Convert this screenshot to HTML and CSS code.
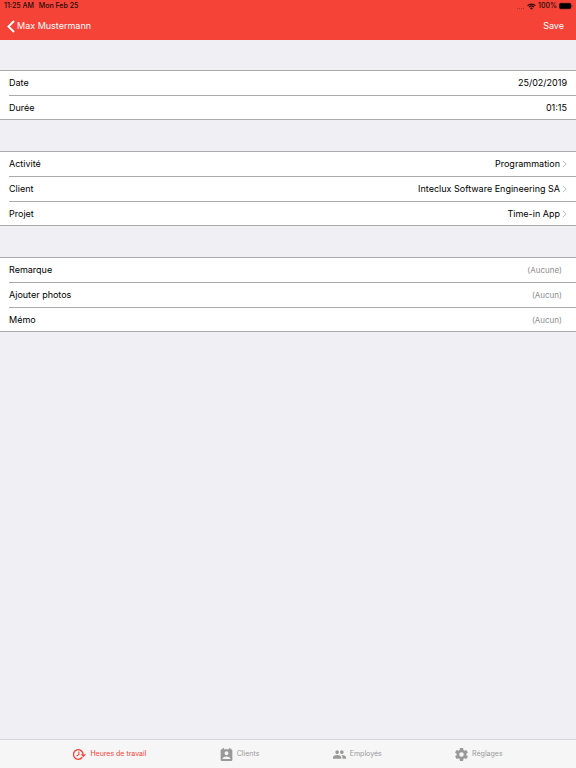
FILE: index.html
```html
<!DOCTYPE html>
<html lang="fr">
<head>
<meta charset="utf-8">
<meta name="viewport" content="width=device-width, initial-scale=1">
<title>Heures de travail</title>
<link rel="stylesheet" href="styles.css">
</head>
<body>
<header class="header">
  <div class="status">
    <div class="status-side"><span>11:25 AM</span><span>Mon Feb 25</span></div>
    <div class="status-side status-right">
      <svg class="signal" viewBox="0 0 10 8" aria-hidden="true"><path d="M1 6.5h1M3.3 6.5h1M5.6 6.5h1M7.9 6.5h1" stroke="currentColor"/></svg>
      <svg class="wifi" viewBox="0 0 16 12" aria-hidden="true"><path d="M1 4.5a10 10 0 0 1 14 0M3.5 7.2a6.4 6.4 0 0 1 9 0" fill="none" stroke="currentColor" stroke-width="2.2"/><path d="M5.4 9a3.7 3.7 0 0 1 5.2 0L8 11.8z" fill="currentColor"/></svg>
      <span>100%</span>
      <svg class="battery" viewBox="0 0 14 8" aria-hidden="true"><rect x=".4" y="1.2" width="11.6" height="5.6" rx="1.4" fill="currentColor" stroke="currentColor" stroke-opacity=".4" stroke-width=".8"/><path d="M12.8 3v2q.9-.3.9-1t-.9-1z" fill="currentColor" opacity=".6"/></svg>
    </div>
  </div>
  <nav class="navbar">
    <a class="back" href="#"><svg viewBox="0 0 8 13" aria-hidden="true"><path d="M7 1 1.500 6.500 7 12" fill="none" stroke="currentColor" stroke-width="1.900"/></svg>Max Mustermann</a>
    <button class="save" type="button">Save</button>
  </nav>
</header>
<main class="content">
  <section class="group">
    <div class="row"><div class="cell"><label for="date">Date</label><input id="date" type="text" value="25/02/2019"></div></div>
    <div class="row"><div class="cell"><label for="duration">Durée</label><input id="duration" type="text" value="01:15"></div></div>
  </section>
  <section class="group">
    <div class="row"><button class="cell" type="button"><span>Activité</span><span class="value">Programmation<svg class="chevron" viewBox="0 0 5 8" aria-hidden="true"><path d="m.8.8 3.400 3.200L.8 7.200"/></svg></span></button></div>
    <div class="row"><button class="cell" type="button"><span>Client</span><span class="value">Inteclux Software Engineering SA<svg class="chevron" viewBox="0 0 5 8" aria-hidden="true"><path d="m.8.8 3.400 3.200L.8 7.200"/></svg></span></button></div>
    <div class="row"><button class="cell" type="button"><span>Projet</span><span class="value">Time-in App<svg class="chevron" viewBox="0 0 5 8" aria-hidden="true"><path d="m.8.8 3.400 3.200L.8 7.200"/></svg></span></button></div>
  </section>
  <section class="group">
    <div class="row"><button class="cell" type="button"><span>Remarque</span><span class="empty">(Aucune)</span></button></div>
    <div class="row"><button class="cell" type="button"><span>Ajouter photos</span><span class="empty">(Aucun)</span></button></div>
    <div class="row"><button class="cell" type="button"><span>Mémo</span><span class="empty">(Aucun)</span></button></div>
  </section>
</main>
<nav class="tabs">
  <a class="tab active" href="#"><svg viewBox="1 1 27 23" aria-hidden="true"><path d="M20.200 18.200A10 10 0 1 1 22 12.500" fill="none" stroke="currentColor" stroke-width="2.800"/><path d="M17 12H28l-5.500 6z" fill="currentColor"/><path d="M13.200 6.500v6l-4.400 3" fill="none" stroke="currentColor" stroke-width="2.200"/></svg>Heures de travail</a>
  <a class="tab" href="#"><svg class="narrow" viewBox="3 1 18 20" aria-hidden="true"><path fill="currentColor" d="M19 3h-1V1h-2v2H8V1H6v2H5a2 2 0 0 0-2 2v14a2 2 0 0 0 2 2h14a2 2 0 0 0 2-2V5a2 2 0 0 0-2-2zm-7 3a3 3 0 1 1 0 6 3 3 0 0 1 0-6zm6 12H6v-1c0-2 4-3.100 6-3.100s6 1.100 6 3.100z"/></svg>Clients</a>
  <a class="tab" href="#"><svg viewBox="1 3 22 18" aria-hidden="true"><path fill="currentColor" d="M16 11c1.660 0 2.990-1.340 2.990-3S17.660 5 16 5s-3 1.340-3 3 1.340 3 3 3zm-8 0c1.660 0 2.990-1.340 2.990-3S9.660 5 8 5 5 6.340 5 8s1.340 3 3 3zm0 2c-2.330 0-7 1.170-7 3.500V19h14v-2.500c0-2.330-4.670-3.500-7-3.500zm8 0c-.290 0-.620.020-.970.050 1.160.840 1.970 1.970 1.970 3.450V19h6v-2.500c0-2.330-4.670-3.500-7-3.500z"/></svg>Employés</a>
  <a class="tab" href="#"><svg viewBox="2 2 20 20" aria-hidden="true"><path fill="currentColor" d="M19.430 12.980c.040-.320.070-.640.070-.980s-.030-.660-.070-.980l2.110-1.650c.190-.150.240-.420.120-.640l-2-3.460c-.120-.220-.390-.300-.610-.220l-2.490 1c-.520-.400-1.080-.730-1.690-.980l-.380-2.650C14.460 2.180 14.250 2 14 2h-4c-.250 0-.460.180-.490.420l-.380 2.650c-.610.250-1.170.590-1.690.980l-2.490-1c-.230-.090-.490 0-.610.220l-2 3.460c-.130.220-.070.490.120.640l2.110 1.650c-.040.320-.070.650-.070.980s.030.660.070.980l-2.110 1.650c-.190.150-.240.420-.120.640l2 3.460c.120.220.390.300.610.220l2.490-1c.520.400 1.080.730 1.690.980l.380 2.650c.030.240.240.420.490.420h4c.250 0 .460-.180.490-.420l.380-2.650c.610-.250 1.170-.590 1.690-.980l2.490 1c.230.090.490 0 .610-.220l2-3.460c.120-.220.070-.490-.120-.640zM12 15.500a3.500 3.500 0 1 1 0-7 3.500 3.500 0 0 1 0 7z"/></svg>Réglages</a>
</nav>
</body>
</html>
```
FILE: styles.css
```css
* { box-sizing: border-box; }
body {
  margin: 0;
  min-height: 100vh;
  display: flex;
  flex-direction: column;
  background: #efeff4;
  color: #000;
  font: 9px/12px Inter, "Liberation Sans", sans-serif;
}
svg { flex: none; display: block; }
a { color: inherit; text-decoration: none; }
button, input {
  margin: 0;
  padding: 0;
  border: 0;
  background: none;
  color: inherit;
  font: inherit;
}
.header { background: #f64337; }
.status {
  display: flex;
  justify-content: space-between;
  padding: 0 3px 0 4px;
  color: #250a08;
  font-size: 7px;
  font-weight: 500;
}
.status-side { display: flex; align-items: center; gap: 5px; }
.status-right { gap: 2px; }
.signal { width: 9px; height: 7px; opacity: .5; }
.wifi { width: 9px; height: 7px; }
.battery { width: 14px; height: 8px; color: #000; }
.navbar {
  height: 28px;
  display: flex;
  align-items: center;
  justify-content: space-between;
  padding: 0 12px 0 7px;
  color: #fff;
}
.back { display: flex; align-items: center; gap: 2px; }
.back svg { width: 8px; height: 13px; }
.content {
  flex: 1;
  display: flex;
  flex-direction: column;
  gap: 31px;
  padding: 30px 0;
}
.group {
  background: #fff;
  border-top: 1px solid #aaaaad;
  border-bottom: 1px solid #aaaaad;
}
.row { padding-left: 9px; }
.cell {
  width: 100%;
  height: 25px;
  display: flex;
  align-items: center;
  justify-content: space-between;
  padding-right: 9px;
  border-bottom: 1px solid #aaaaad;
  text-align: left;
}
.row:last-child .cell { height: 23px; border-bottom: 0; }
.cell input { flex: 1; min-width: 0; text-align: right; }
.value { display: flex; align-items: center; gap: 2px; }
.chevron {
  width: 5px;
  height: 8px;
  fill: none;
  stroke: #bcbcc0;
}
.empty { padding-right: 5px; color: #8e8e8e; font-size: 8px; }
.tabs {
  position: sticky;
  bottom: 0;
  height: 29px;
  display: flex;
  align-items: center;
  justify-content: space-evenly;
  border-top: 1px solid #d5d5dc;
  background: #f6f6f6;
  color: #999;
  font-size: 7px;
}
.tab { display: flex; align-items: center; gap: 4px; }
.tab svg { width: 13px; height: 13px; }
.active { color: #f64337; }
```
